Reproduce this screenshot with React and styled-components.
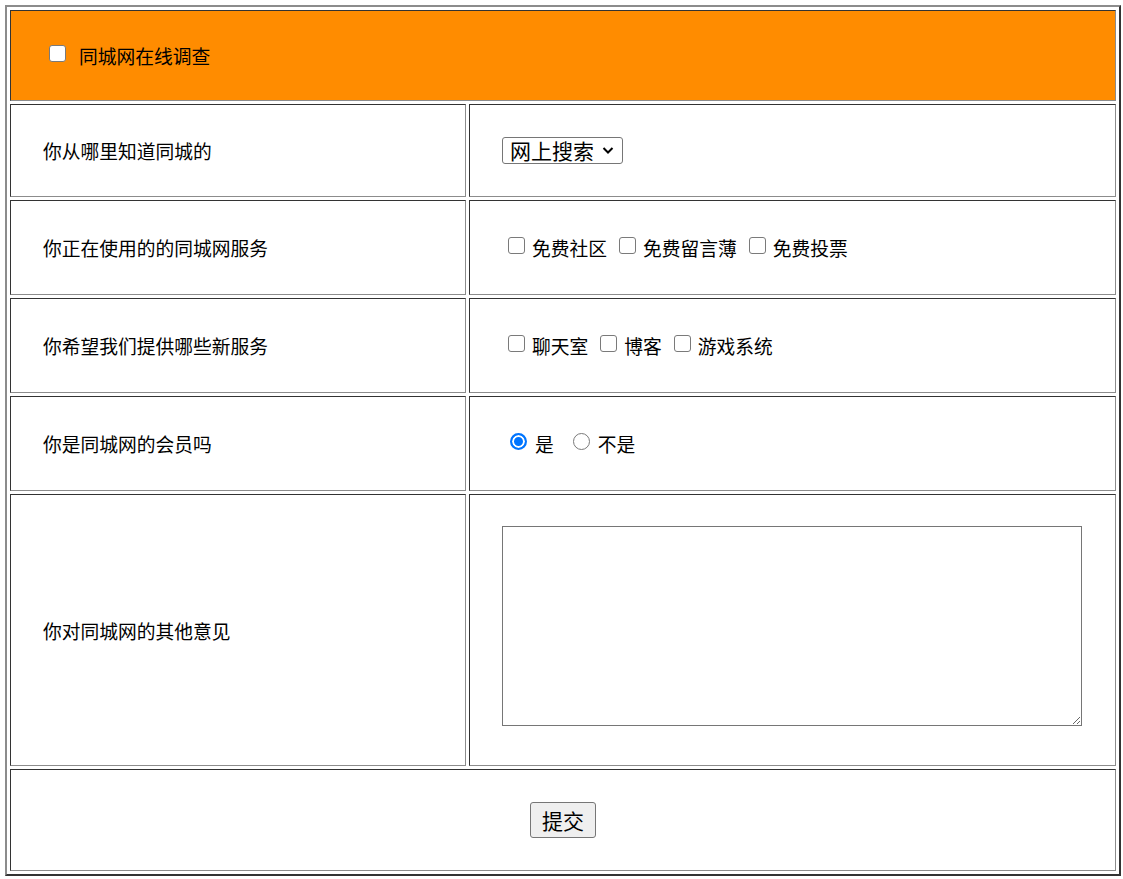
import React from 'react';
import styled, { createGlobalStyle } from 'styled-components';

const GlobalStyle = createGlobalStyle`
    body {
        margin: 0;
        padding: 5px;
        background: #fff;
        font-family: "Noto Sans CJK SC", "Noto Sans", sans-serif;
        color: #000;
    }
`;

const Survey = styled.form`
    box-sizing: border-box;
    width: 1116px;
    display: grid;
    grid-template-columns: 456px 647px;
    grid-template-rows: 91px 93px 95px 95px 95px 272px 102px;
    gap: 3px;
    padding: 3px;
    border: 2px solid;
    border-color: #8c8c8c #333 #333 #8c8c8c; /* outset */
`;

const Cell = styled.div`
    box-sizing: border-box;
    display: flex;
    align-items: ${p => (p.$top ? 'flex-start' : 'center')};
    justify-content: ${p => (p.$center ? 'center' : 'flex-start')};
    grid-column: ${p => (p.$wide ? '1 / 3' : 'auto')};
    padding: ${p => (p.$top ? '31px 32px 0' : '0 32px')};
    border: 1px solid;
    border-color: #333 #8c8c8c #8c8c8c #333; /* inset */
    background: ${p => p.$bg || '#fff'};
    font-size: 18.75px;
    line-height: 25px;
`;

const Group = styled.div`
    display: flex;
    align-items: center;
    gap: ${p => p.$gap || 6}px;
`;

const Option = styled.label`
    display: inline-flex;
    align-items: center;
    margin-left: ${p => p.$lead || 6}px;
`;

const Box = styled.input`
    appearance: none;
    box-sizing: border-box;
    width: 17px;
    height: 17px;
    margin: 0 ${p => p.$after || 7}px 4px 0;
    background: #fff;
    border: 1.5px solid #7a7a7a;
    border-radius: ${p => (p.type === 'radio' ? '50%' : '3px')};

    &[type='radio']:checked {
        border: 2px solid #0075ff;
        background: #0075ff;
        box-shadow: inset 0 0 0 2px #fff;
    }
`;

const Text = styled.span`
    white-space: nowrap;
`;

const PickerWrap = styled.span`
    position: relative;
    display: inline-flex;
`;

const Picker = styled.select`
    appearance: none;
    box-sizing: border-box;
    width: 121px;
    height: 27px;
    padding: 0 24px 0 7px;
    font-family: inherit;
    font-size: 21px;
    line-height: 25px;
    border: 1px solid #767676;
    border-radius: 3px;
    background: #fff;
    color: #000;
`;

const Chevron = styled.svg`
    position: absolute;
    right: 9px;
    top: 9px;
    width: 12px;
    height: 9px;
    pointer-events: none;
`;

const Opinion = styled.textarea`
    box-sizing: border-box;
    display: block;
    width: 580px;
    height: 200px;
    border: 1px solid #767676;
    border-radius: 0;
    font-family: inherit;
`;

const Submit = styled.button`
    box-sizing: border-box;
    width: 66px;
    height: 36px;
    padding: 0;
    font-family: inherit;
    font-size: 21px;
    line-height: 1;
    color: #000;
    background: #efefef;
    border: 1px solid #767676;
    border-radius: 3px;
`;

const usedServices = ['免费社区', '免费留言薄', '免费投票'];
const newServices = ['聊天室', '博客', '游戏系统'];

const App = () => {
    return (
        <>
            <GlobalStyle />
            <Survey onSubmit={e => e.preventDefault()}>
                <Cell $wide $bg="#ff8c00">
                    <Option $lead={6}>
                        <Box type="checkbox" $after={13} />
                        <Text>同城网在线调查</Text>
                    </Option>
                </Cell>

                <Cell>你从哪里知道同城的</Cell>
                <Cell>
                    <PickerWrap>
                        <Picker defaultValue="网上搜索">
                            <option>网上搜索</option>
                            <option>朋友介绍</option>
                            <option>广告</option>
                        </Picker>
                        <Chevron viewBox="0 0 12 9">
                            <path d="M1.5 2 L6 6.5 L10.5 2" fill="none" stroke="#000" strokeWidth="2" />
                        </Chevron>
                    </PickerWrap>
                </Cell>

                <Cell>你正在使用的的同城网服务</Cell>
                <Cell>
                    <Group>
                        {usedServices.map(s => (
                            <Option key={s}>
                                <Box type="checkbox" />
                                <Text>{s}</Text>
                            </Option>
                        ))}
                    </Group>
                </Cell>

                <Cell>你希望我们提供哪些新服务</Cell>
                <Cell>
                    <Group>
                        {newServices.map(s => (
                            <Option key={s}>
                                <Box type="checkbox" />
                                <Text>{s}</Text>
                            </Option>
                        ))}
                    </Group>
                </Cell>

                <Cell>你是同城网的会员吗</Cell>
                <Cell>
                    <Group $gap={11}>
                        <Option $lead={8}>
                            <Box type="radio" name="member" defaultChecked $after={8} />
                            <Text>是</Text>
                        </Option>
                        <Option $lead={8}>
                            <Box type="radio" name="member" $after={8} />
                            <Text>不是</Text>
                        </Option>
                    </Group>
                </Cell>

                <Cell>你对同城网的其他意见</Cell>
                <Cell $top>
                    <Opinion />
                </Cell>

                <Cell $wide $center>
                    <Submit type="submit">提交</Submit>
                </Cell>
            </Survey>
        </>
    );
};

export default App;
